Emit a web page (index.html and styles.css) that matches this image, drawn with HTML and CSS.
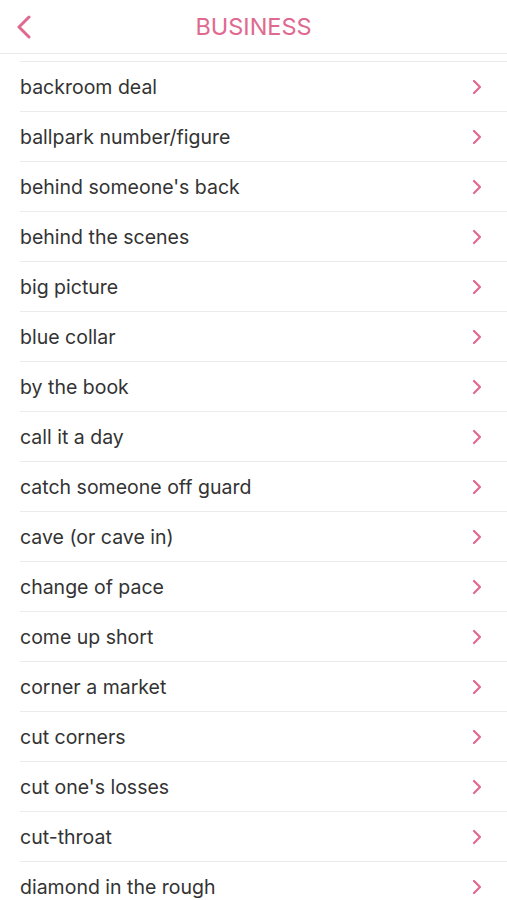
FILE: index.html
```html
<!DOCTYPE html>
<html>
<head>
<meta charset="utf-8">
<link rel="stylesheet" href="styles.css">
</head>
<body>
<header class="nav">
  <button class="back" aria-label="Back">
    <svg width="16" height="24" viewBox="0 0 16 24"><path d="M13 2 L3 12 L13 22" fill="none" stroke="#e0698f" stroke-width="3" stroke-linecap="round" stroke-linejoin="round"/></svg>
  </button>
  <h1 class="title">BUSINESS</h1>
</header>
<ul class="list">
  <li class="row"><span>backroom deal</span><svg class="chev" width="10" height="16" viewBox="0 0 10 16"><path d="M2 2 L8 8 L2 14" fill="none" stroke="#e0698f" stroke-width="2.2" stroke-linecap="round" stroke-linejoin="round"/></svg></li>
  <li class="row"><span>ballpark number/figure</span><svg class="chev" width="10" height="16" viewBox="0 0 10 16"><path d="M2 2 L8 8 L2 14" fill="none" stroke="#e0698f" stroke-width="2.2" stroke-linecap="round" stroke-linejoin="round"/></svg></li>
  <li class="row"><span>behind someone's back</span><svg class="chev" width="10" height="16" viewBox="0 0 10 16"><path d="M2 2 L8 8 L2 14" fill="none" stroke="#e0698f" stroke-width="2.2" stroke-linecap="round" stroke-linejoin="round"/></svg></li>
  <li class="row"><span>behind the scenes</span><svg class="chev" width="10" height="16" viewBox="0 0 10 16"><path d="M2 2 L8 8 L2 14" fill="none" stroke="#e0698f" stroke-width="2.2" stroke-linecap="round" stroke-linejoin="round"/></svg></li>
  <li class="row"><span>big picture</span><svg class="chev" width="10" height="16" viewBox="0 0 10 16"><path d="M2 2 L8 8 L2 14" fill="none" stroke="#e0698f" stroke-width="2.2" stroke-linecap="round" stroke-linejoin="round"/></svg></li>
  <li class="row"><span>blue collar</span><svg class="chev" width="10" height="16" viewBox="0 0 10 16"><path d="M2 2 L8 8 L2 14" fill="none" stroke="#e0698f" stroke-width="2.2" stroke-linecap="round" stroke-linejoin="round"/></svg></li>
  <li class="row"><span>by the book</span><svg class="chev" width="10" height="16" viewBox="0 0 10 16"><path d="M2 2 L8 8 L2 14" fill="none" stroke="#e0698f" stroke-width="2.2" stroke-linecap="round" stroke-linejoin="round"/></svg></li>
  <li class="row"><span>call it a day</span><svg class="chev" width="10" height="16" viewBox="0 0 10 16"><path d="M2 2 L8 8 L2 14" fill="none" stroke="#e0698f" stroke-width="2.2" stroke-linecap="round" stroke-linejoin="round"/></svg></li>
  <li class="row"><span>catch someone off guard</span><svg class="chev" width="10" height="16" viewBox="0 0 10 16"><path d="M2 2 L8 8 L2 14" fill="none" stroke="#e0698f" stroke-width="2.2" stroke-linecap="round" stroke-linejoin="round"/></svg></li>
  <li class="row"><span>cave (or cave in)</span><svg class="chev" width="10" height="16" viewBox="0 0 10 16"><path d="M2 2 L8 8 L2 14" fill="none" stroke="#e0698f" stroke-width="2.2" stroke-linecap="round" stroke-linejoin="round"/></svg></li>
  <li class="row"><span>change of pace</span><svg class="chev" width="10" height="16" viewBox="0 0 10 16"><path d="M2 2 L8 8 L2 14" fill="none" stroke="#e0698f" stroke-width="2.2" stroke-linecap="round" stroke-linejoin="round"/></svg></li>
  <li class="row"><span>come up short</span><svg class="chev" width="10" height="16" viewBox="0 0 10 16"><path d="M2 2 L8 8 L2 14" fill="none" stroke="#e0698f" stroke-width="2.2" stroke-linecap="round" stroke-linejoin="round"/></svg></li>
  <li class="row"><span>corner a market</span><svg class="chev" width="10" height="16" viewBox="0 0 10 16"><path d="M2 2 L8 8 L2 14" fill="none" stroke="#e0698f" stroke-width="2.2" stroke-linecap="round" stroke-linejoin="round"/></svg></li>
  <li class="row"><span>cut corners</span><svg class="chev" width="10" height="16" viewBox="0 0 10 16"><path d="M2 2 L8 8 L2 14" fill="none" stroke="#e0698f" stroke-width="2.2" stroke-linecap="round" stroke-linejoin="round"/></svg></li>
  <li class="row"><span>cut one's losses</span><svg class="chev" width="10" height="16" viewBox="0 0 10 16"><path d="M2 2 L8 8 L2 14" fill="none" stroke="#e0698f" stroke-width="2.2" stroke-linecap="round" stroke-linejoin="round"/></svg></li>
  <li class="row"><span>cut-throat</span><svg class="chev" width="10" height="16" viewBox="0 0 10 16"><path d="M2 2 L8 8 L2 14" fill="none" stroke="#e0698f" stroke-width="2.2" stroke-linecap="round" stroke-linejoin="round"/></svg></li>
  <li class="row"><span>diamond in the rough</span><svg class="chev" width="10" height="16" viewBox="0 0 10 16"><path d="M2 2 L8 8 L2 14" fill="none" stroke="#e0698f" stroke-width="2.2" stroke-linecap="round" stroke-linejoin="round"/></svg></li>
</ul>
</body>
</html>
```
FILE: styles.css
```css
html, body {
  margin: 0;
  padding: 0;
  background: #ffffff;
  overflow: hidden;
  height: 900px;
}
body {
  font-family: "Inter", "Liberation Sans", sans-serif;
  color: #333333;
}
.nav {
  position: relative;
  height: 53px;
  border-bottom: 1px solid #ececec;
  display: flex;
  align-items: center;
  justify-content: center;
}
.back {
  position: absolute;
  left: 16px;
  top: 15px;
  padding: 0;
  border: 0;
  background: none;
  display: flex;
}
.title {
  margin: 0;
  font-size: 23.5px;
  font-weight: 400;
  color: #e0698f;
  letter-spacing: 0;
}
.list {
  list-style: none;
  margin: 7px 0 0 20px;
  padding: 0;
}
.row {
  height: 49px;
  border-top: 1px solid #ececec;
  display: flex;
  align-items: center;
  justify-content: space-between;
  padding-right: 25px;
  font-size: 19.5px;
}
.chev {
  display: block;
}
```
